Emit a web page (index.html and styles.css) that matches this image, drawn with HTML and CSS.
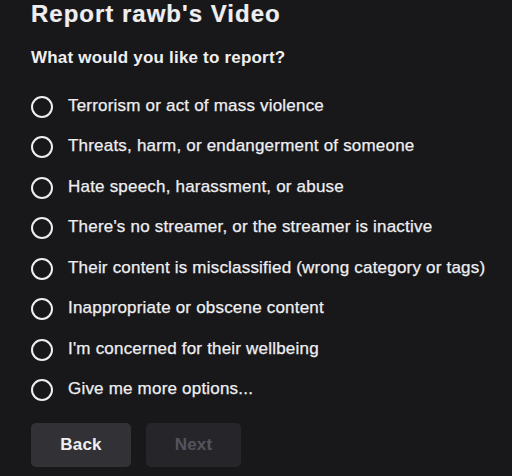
FILE: index.html
```html
<!DOCTYPE html>
<html lang="en">
<head>
<meta charset="utf-8">
<title>Report rawb's Video</title>
<link rel="stylesheet" href="styles.css">
</head>
<body>
<div class="dialog">
  <h1 class="title">Report rawb's Video</h1>
  <p class="question">What would you like to report?</p>
  <ul class="options">
    <li class="option"><span class="radio"></span><span class="label">Terrorism or act of mass violence</span></li>
    <li class="option"><span class="radio"></span><span class="label">Threats, harm, or endangerment of someone</span></li>
    <li class="option"><span class="radio"></span><span class="label">Hate speech, harassment, or abuse</span></li>
    <li class="option"><span class="radio"></span><span class="label">There's no streamer, or the streamer is inactive</span></li>
    <li class="option"><span class="radio"></span><span class="label">Their content is misclassified (wrong category or tags)</span></li>
    <li class="option"><span class="radio"></span><span class="label">Inappropriate or obscene content</span></li>
    <li class="option"><span class="radio"></span><span class="label">I'm concerned for their wellbeing</span></li>
    <li class="option"><span class="radio"></span><span class="label">Give me more options...</span></li>
  </ul>
  <div class="actions">
    <button class="btn btn-back" type="button">Back</button>
    <button class="btn btn-next" type="button" disabled>Next</button>
  </div>
</div>
</body>
</html>
```
FILE: styles.css
```css
html, body {
  margin: 0;
  padding: 0;
  background: #18181b;
}
body {
  width: 512px;
  height: 476px;
  overflow: hidden;
  font-family: "Liberation Sans", Arial, sans-serif;
  color: #efeff1;
}
.dialog {
  padding: 0 31px;
}
.title {
  margin: 0;
  font-size: 24px;
  line-height: 27px;
  font-weight: 700;
  letter-spacing: 1px;
  -webkit-text-stroke: 0.2px currentColor;
}
.question {
  margin: 21px 0 0;
  font-size: 17px;
  line-height: 20px;
  font-weight: 700;
  letter-spacing: 0.2px;
}
.options {
  list-style: none;
  margin: 17.5px 0 0;
  padding: 0;
}
.option {
  height: 40.5px;
  display: flex;
  align-items: center;
  gap: 15px;
}
.radio {
  flex: none;
  width: 22px;
  height: 22px;
  box-sizing: border-box;
  border: 2.6px solid #efeff1;
  border-radius: 50%;
  margin-top: 2px;
}
.label {
  font-size: 17px;
  line-height: 20px;
  letter-spacing: 0.2px;
  white-space: nowrap;
  -webkit-text-stroke: 0.25px currentColor;
}
.actions {
  margin-top: 13px;
  display: flex;
  gap: 15px;
}
.btn {
  height: 44px;
  border: 0;
  border-radius: 5px;
  font-family: "Liberation Sans", Arial, sans-serif;
  font-size: 17px;
  font-weight: 700;
  letter-spacing: 0.2px;
  padding: 0;
}
.btn-back {
  width: 100px;
  background: #323236;
  color: #efeff1;
}
.btn-next {
  width: 95px;
  background: #26262a;
  color: #54545c;
}
```
